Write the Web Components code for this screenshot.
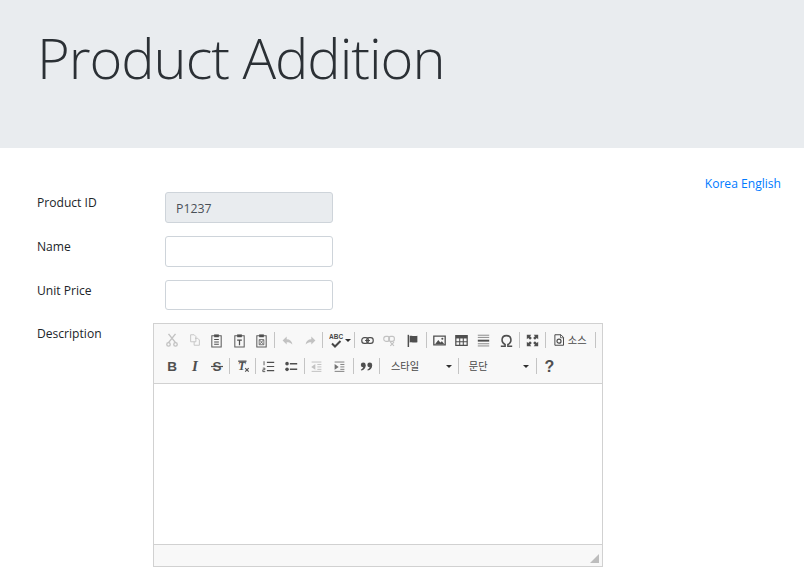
<!DOCTYPE html>
<html lang="en"><head><meta charset="utf-8"><style>
html{overflow:hidden}
html,body{margin:0;padding:0;background:#fff}
body{font-family:"Open Sans","Noto Sans CJK KR",sans-serif;color:#212529}
</style></head><body>
<page-header>Product Addition</page-header>
<page-body>
  <lang-links slot="lang"></lang-links>
  <form-row label="Product ID" h="44"><text-field value="P1237" disabled></text-field></form-row>
  <form-row label="Name" h="44"><text-field></text-field></form-row>
  <form-row label="Unit Price" h="43"><text-field fh="30"></text-field></form-row>
  <form-row label="Description" wide="1"><rich-editor></rich-editor></form-row>
</page-body>
<script>
const sh=(el,html)=>{el.attachShadow({mode:'open'}).innerHTML=html};
customElements.define('page-header',class extends HTMLElement{connectedCallback(){sh(this,`<style>:host{display:block;height:148px;background:#e9ecef;box-sizing:border-box;padding:24px 0 0 37px}
h1{margin:0;font:300 56px/1.2 "Open Sans",sans-serif;color:#2b3035;letter-spacing:-1.03px}</style><h1><slot></slot></h1>`)}});
customElements.define('page-body',class extends HTMLElement{connectedCallback(){sh(this,`<style>:host{display:block;position:relative;padding:44px 0 0 37px;height:426px;box-sizing:border-box}
.lang{position:absolute;right:23px;top:26px}</style><div class="lang"><slot name="lang"></slot></div><slot></slot>`)}});
customElements.define('lang-links',class extends HTMLElement{connectedCallback(){sh(this,`<style>:host{display:block;font:12.1px/19px "Open Sans",sans-serif;color:#007bff}</style>Korea English`)}});
customElements.define('form-row',class extends HTMLElement{connectedCallback(){const w=this.hasAttribute('wide');sh(this,`<style>:host{display:flex;height:${this.getAttribute('h')||244}px}
.l{width:${w?116:128}px;flex:none;font:12.1px/19px "Open Sans",sans-serif;color:#212529;padding-top:1px}
</style><div class="l">${this.getAttribute('label')}</div><slot></slot>`)}});
customElements.define('text-field',class extends HTMLElement{connectedCallback(){const d=this.hasAttribute('disabled');sh(this,`<style>:host{display:block;width:168px;height:${this.getAttribute('fh')||31}px;box-sizing:border-box;border:1px solid #ced4da;border-radius:3px;background:${d?'#e9ecef':'#fff'};font:12.3px/31px "Open Sans",sans-serif;color:#495057;padding-left:10px}</style>${this.getAttribute('value')||''}`)}});
const S=(d,s=13)=>`<svg width="${s}" height="${s}" viewBox="0 0 16 16">${d}</svg>`;
const clip=(inner)=>`<path d="M3 3h10v12H3z" fill="none" stroke="#555" stroke-width="1.1"/><path d="M5.500 1.500h5v3h-5z" fill="#474747"/>${inner}`;
const SZ={paste:15,text:15,word:15,bold:16,italic:16,strike:16,clear:14,help:16,cut:14,copy:14,spell:16};
const I={
cut:`<path d="M4 1l8 10M12 1L4 11" stroke="#474747" stroke-width="1.600" fill="none"/><circle cx="4" cy="13" r="2" fill="none" stroke="#474747" stroke-width="1.500"/><circle cx="12" cy="13" r="2" fill="none" stroke="#474747" stroke-width="1.500"/>`,
copy:`<path d="M3 2h4l2 2v6H3zM8 6h3l2 2v6H7v-4" fill="none" stroke="#474747" stroke-width="1"/>`,
paste:clip(`<path d="M5.500 7h5M5.500 9.500h5M5.500 12h5" stroke="#474747" stroke-width="1.100"/>`),
text:clip(`<path d="M5.500 7.500h5M8 7.500V13" stroke="#474747" stroke-width="1.300"/>`),
word:clip(`<path d="M5.500 7h5v5.500h-5zM6 7.500l4 4.500M10 7.500l-4 4.500" stroke="#474747" stroke-width=".8" fill="none"/>`),
undo:`<path d="M7 3L2 8l5 5v-3c3 0 5 .5 7 3-.5-4-3-6.500-7-6.500z" fill="#474747"/>`,
redo:`<path d="M9 3l5 5-5 5v-3c-3 0-5 .5-7 3 .5-4 3-6.500 7-6.500z" fill="#474747"/>`,
link:`<rect x="1" y="4.500" width="8" height="7" rx="3" fill="none" stroke="#474747" stroke-width="1.500"/><rect x="7" y="4.500" width="8" height="7" rx="3" fill="none" stroke="#474747" stroke-width="1.500"/><path d="M5 8h6" stroke="#474747" stroke-width="1.300"/>`,
unlink:`<rect x="1" y="3" width="7" height="6" rx="2.500" fill="none" stroke="#474747" stroke-width="1.400"/><rect x="7" y="3" width="7" height="6" rx="2.500" fill="none" stroke="#474747" stroke-width="1.400"/><path d="M9 10l4.500 4.500M13.500 10L9 14.500" stroke="#474747" stroke-width="1.400"/>`,
flag:`<path d="M2 1h1.800v15H2z" fill="#474747"/><path d="M4.500 2.500c2-1 4 0 5.500 0s2 0 4-.5v8c-2 .5-2.500 .5-4 .5s-3.500-1-5.500 0z" fill="#474747"/>`,
image:`<path d="M1 2.500h14v11H1z" fill="none" stroke="#474747" stroke-width="1.600"/><path d="M2.500 12.500l4-5 2.500 3 2-1.500 3 3.500z" fill="#474747"/><circle cx="11.500" cy="5.800" r="1.300" fill="#474747"/>`,
table:`<path d="M1 2h14v12H1z" fill="none" stroke="#474747" stroke-width="1.500"/><path d="M1 2h14v3.500H1z" fill="#474747"/><path d="M1 9.500h14M5.800 5v9M10.200 5v9" stroke="#474747" stroke-width="1.300"/>`,
hr:`<path d="M1 7h14v2.400H1z" fill="#474747"/><path d="M1 1.500h14M1 4.200h14M1 12h14M1 14.700h14" stroke="#474747" stroke-width="1.200" opacity=".65"/>`,
omega:`<path d="M1 15h5.300v-2C4 12 2.500 10 2.500 7.500 2.500 4 5 2 8 2s5.500 2 5.500 5.500c0 2.500-1.500 4.500-3.800 5.500v2H15" fill="none" stroke="#474747" stroke-width="1.900"/>`,
max:`<path d="M1 1h5.500L5 2.700 7.200 5 5 7.200 2.700 5 1 6.500zM15 1v5.500L13.300 5 11 7.200 8.800 5 11 2.700 9.500 1zM1 15V9.500L2.700 11 5 8.800 7.200 11 5 13.300 6.500 15zM15 15H9.500L11 13.300 8.800 11 11 8.800 13.300 11 15 9.500z" fill="#474747"/>`,
source:`<path d="M2.500 1h8l3.500 3.500V15H2.500z" fill="none" stroke="#474747" stroke-width="1.300"/><path d="M10 1v4h4" fill="none" stroke="#474747" stroke-width="1"/><circle cx="8" cy="9.500" r="2.700" fill="none" stroke="#474747" stroke-width="1.500"/>`,
bold:`<text x="8" y="13" text-anchor="middle" font-family="Liberation Sans" font-weight="700" font-size="13.500" fill="#474747">B</text>`,
italic:`<text x="8" y="13" text-anchor="middle" font-family="Liberation Serif" font-weight="700" font-style="italic" font-size="15" fill="#474747">I</text>`,
strike:`<text x="8" y="13" text-anchor="middle" font-family="Liberation Sans" font-weight="700" font-size="13.500" fill="#474747">S</text><path d="M2 8.500h12" stroke="#474747" stroke-width="1.200"/>`,
clear:`<text x="6.500" y="13" text-anchor="middle" font-family="Liberation Serif" font-weight="700" font-style="italic" font-size="14" fill="#474747">T</text><path d="M10.500 10.500l4 4M14.500 10.500l-4 4" stroke="#474747" stroke-width="1.300"/><path d="M2.500 2.500h9.500" stroke="#474747" stroke-width="1.500"/>`,
ol:`<path d="M6 3h9M6 8h9M6 13h9" stroke="#474747" stroke-width="1.500"/><path d="M2.500 1.500v5M1 10h2.500v2H1v2.300h3" stroke="#474747" stroke-width="1.100" fill="none"/>`,
ul:`<path d="M6 4.500h9M6 11.500h9" stroke="#474747" stroke-width="1.800"/><circle cx="2.500" cy="4.500" r="2.200" fill="#474747"/><circle cx="2.500" cy="11.500" r="2.200" fill="#474747"/>`,
outdent:`<path d="M2 2.500h12M9 5.500h5M9 8.500h5M9 11.500h5M2 14h12" stroke="#474747" stroke-width="1.200"/><path d="M6.500 5v7L1.500 8.500z" fill="#474747"/>`,
indent:`<path d="M2 2.500h12M9 5.500h5M9 8.500h5M9 11.500h5M2 14h12" stroke="#474747" stroke-width="1.200" opacity=".7"/><path d="M2 5v7l5-3.500z" fill="#474747" opacity=".8"/>`,
quote:`<circle cx="4" cy="6" r="3" fill="#474747"/><circle cx="12" cy="6" r="3" fill="#474747"/><path d="M7 6c0 4-2 6-5.500 7l-.5-1c2-1 3-2.500 3-4zM15 6c0 4-2 6-5.500 7l-.5-1c2-1 3-2.500 3-4z" fill="#474747"/>`,
help:`<text x="8.500" y="14" text-anchor="middle" font-family="Liberation Sans" font-weight="700" font-size="16" fill="#474747">?</text>`,
spell:`<text x="0" y="7" font-family="Liberation Sans" font-weight="700" font-size="6.500" fill="#474747">ABC</text><path d="M3 11.500l3 3 5.500-5.500" stroke="#474747" stroke-width="2" fill="none"/>`
};
customElements.define('tool-btn',class extends HTMLElement{connectedCallback(){const off=this.hasAttribute('off');const n=this.getAttribute('i');sh(this,`<style>:host{display:flex;width:22.4px;height:22px;align-items:center;justify-content:center;flex:none}
svg{opacity:${off?.3:.95};display:block}</style>${S(I[n],SZ[n]||13)}`)}});
customElements.define('tool-sep',class extends HTMLElement{connectedCallback(){const w=this.hasAttribute('w');sh(this,`<style>:host{display:block;width:1px;height:16px;background:#c4c4c4;margin:3px 1.300px 0 ${w?2.2:1.2}px;flex:none}</style>`)}});
customElements.define('tool-combo',class extends HTMLElement{connectedCallback(){sh(this,`<style>:host{display:flex;align-items:center;width:${this.getAttribute('w')}px;height:22px;box-sizing:border-box;padding-left:${this.getAttribute('p')||10}px;font:10.200px/20px "Noto Sans CJK KR",sans-serif;color:#484848;flex:none;position:relative}
i{position:absolute;right:5px;top:10px;border:3px solid transparent;border-top-color:#2f2f2f;border-bottom:0;width:0;height:0}</style><slot></slot><i></i>`)}});
customElements.define('rich-editor',class extends HTMLElement{connectedCallback(){
const b=(s)=>s.split(' ').map(t=>t==='|'?'<tool-sep></tool-sep>':t==='||'?'<tool-sep w></tool-sep>':t[0]==='-'?`<tool-btn off i="${t.slice(1)}"></tool-btn>`:`<tool-btn i="${t}"></tool-btn>`).join('');
sh(this,`<style>:host{display:block;width:450px;height:244px;box-sizing:border-box;border:1px solid #d1d1d1;display:flex;flex-direction:column}
.tb{height:60px;box-sizing:border-box;background:#f8f8f8;border-bottom:1px solid #d1d1d1;padding:5px 0 0 7px;flex:none}
.r{display:flex;height:22px;margin-bottom:4px}
.spell{display:flex;align-items:center;width:26px;flex:none;margin-left:2px}.spell svg{display:block;flex:none;margin-left:2px}
.spell i{border:3px solid transparent;border-top-color:#2f2f2f;border-bottom:0;width:0;height:0;margin:0 0 0 0}
.src{display:flex;align-items:center;flex:none;width:46px;font:10.200px/20px "Noto Sans CJK KR",sans-serif;color:#484848;padding-left:5px;box-sizing:border-box;gap:3px}
.main{flex:1;background:#fff}
.ft{height:22px;flex:none;background:#f8f8f8;border-top:1px solid #d1d1d1;position:relative;box-sizing:border-box}
.ft svg{position:absolute;right:3px;bottom:3px}</style>
<div class="tb"><div class="r">${b('-cut -copy paste text word | -undo -redo |')}<span class="spell">${S(I.spell,16)}<i></i></span><tool-sep></tool-sep>${b('link -unlink flag || image table hr omega | max ||')}<span class="src">${S(I.source,12)}<span>소스</span></span><tool-sep></tool-sep></div>
<div class="r">${b('bold italic strike | clear | ol ul | -outdent indent || quote |')}<tool-combo w="76">스타일</tool-combo><tool-sep></tool-sep><tool-combo w="74" p="8.4">문단</tool-combo><tool-sep></tool-sep>${b('help')}</div></div>
<div class="main"></div><div class="ft"><svg width="9" height="9" viewBox="0 0 9 9"><path d="M9 0v9H0z" fill="#bdbdbd"/></svg></div>`)}});
</script>
</body></html>
